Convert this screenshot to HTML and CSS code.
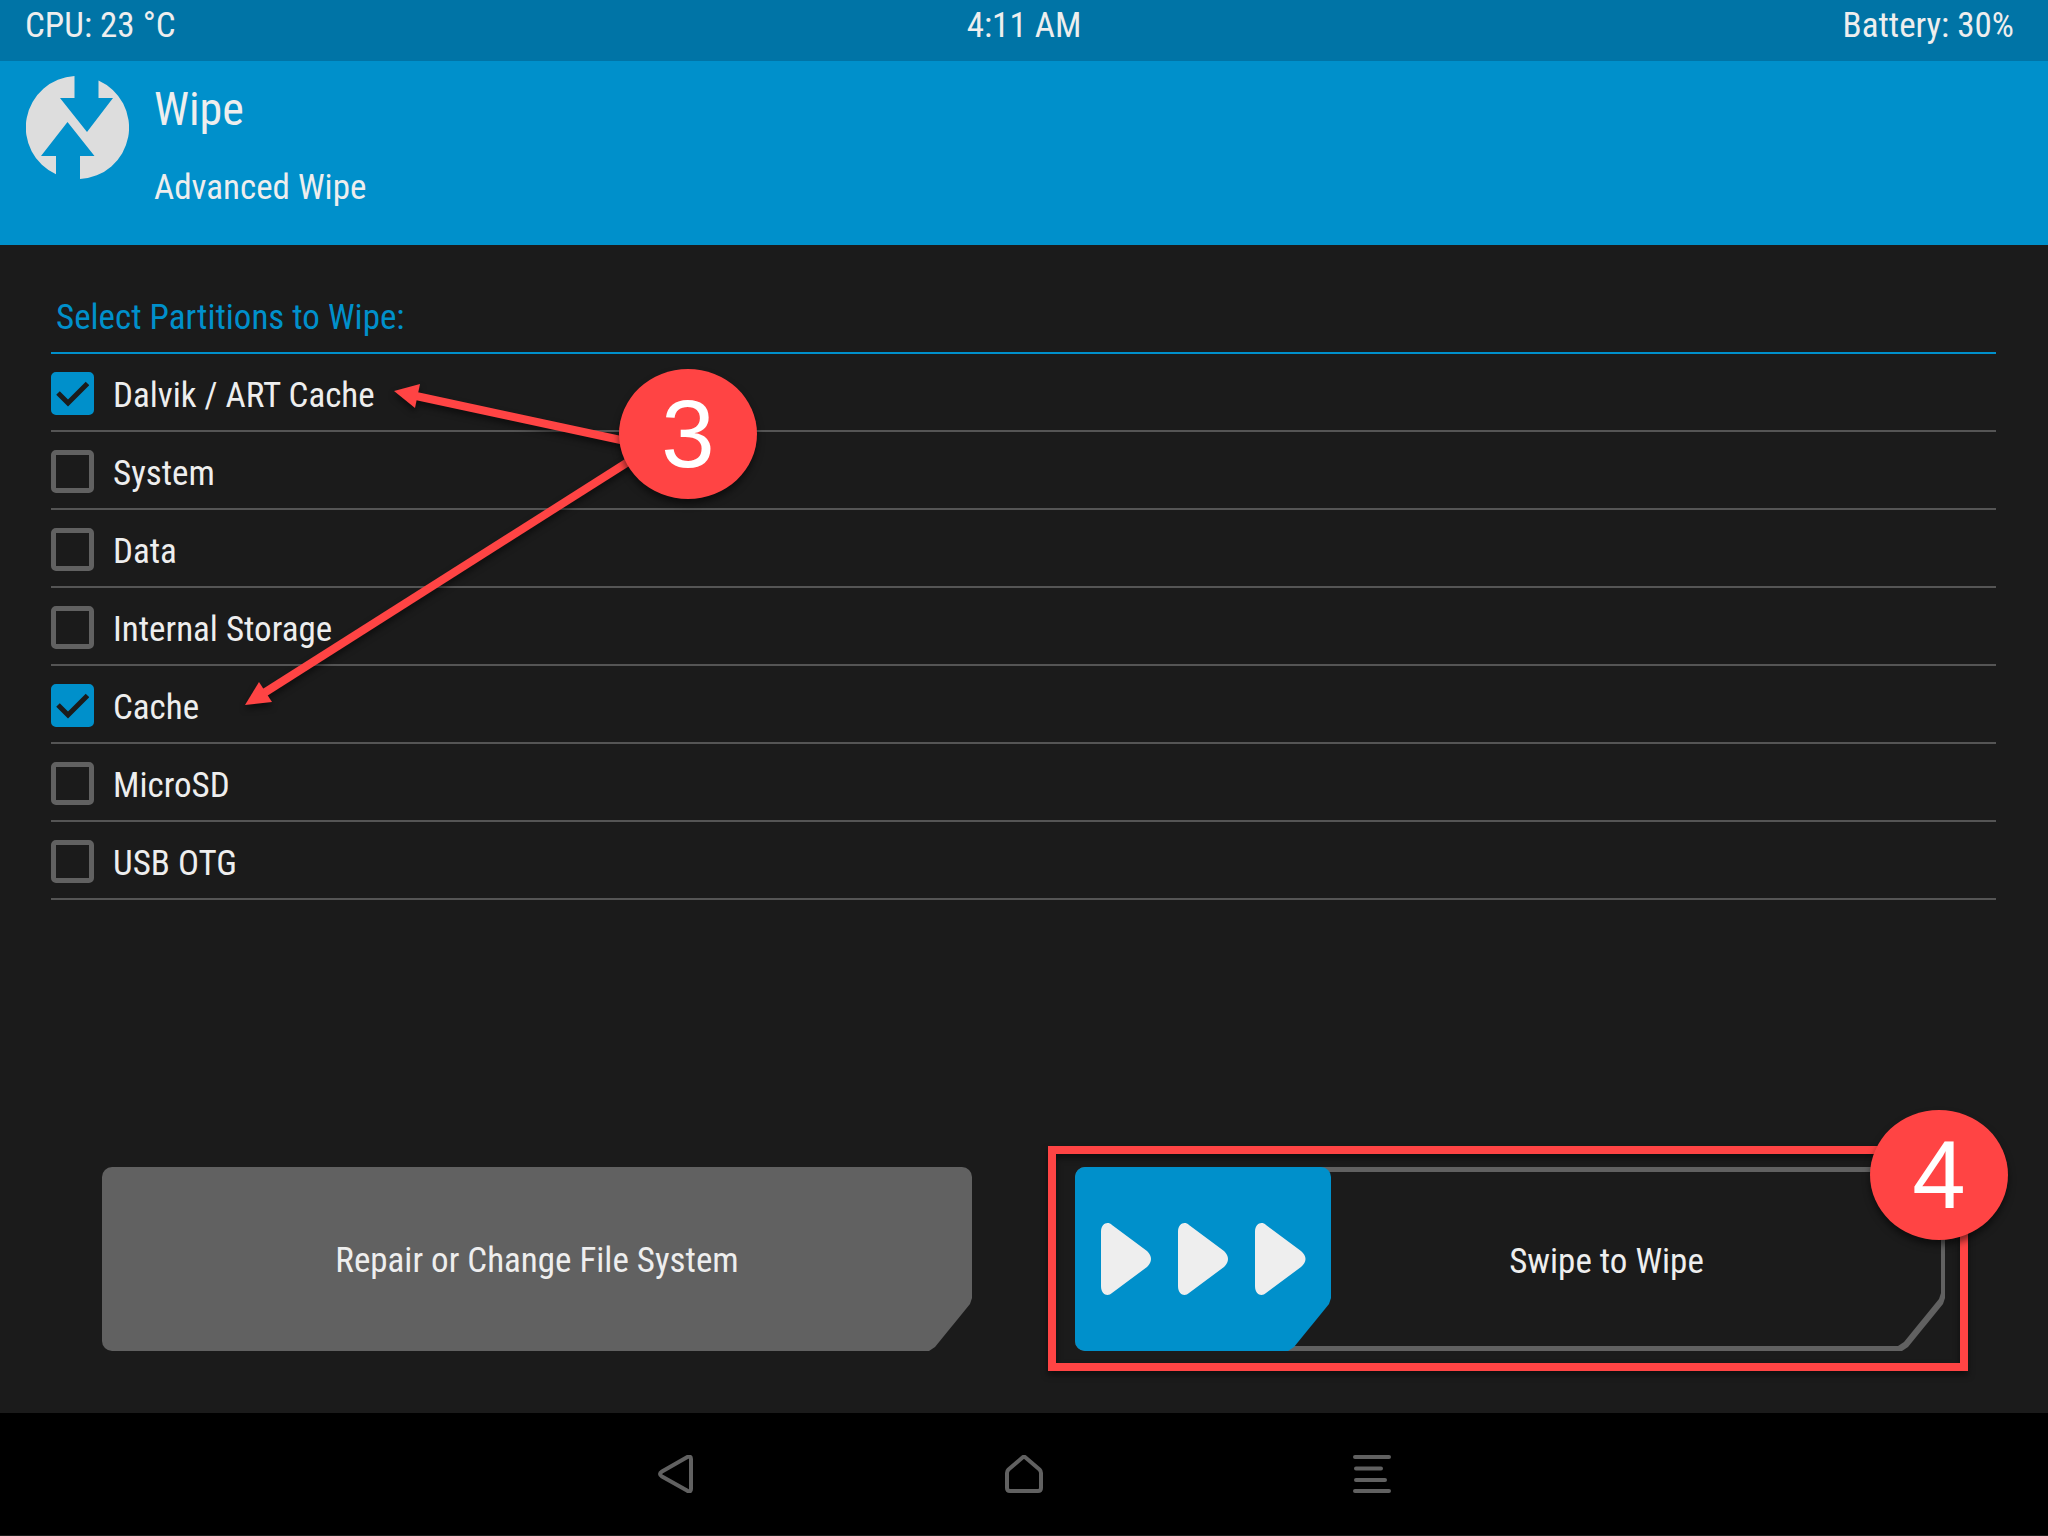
FILE: index.html
```html
<!DOCTYPE html>
<html lang="en">
<head>
<meta charset="utf-8">
<meta name="viewport" content="width=device-width, initial-scale=1">
<title>Advanced Wipe</title>
<link rel="stylesheet" href="styles.css">
</head>
<body>
<div class="status">
  <span class="status-cpu">CPU: 23 °C</span>
  <span>4:11 AM</span>
  <span class="status-battery">Battery: 30%</span>
</div>

<header class="header">
  <svg class="logo" viewBox="0 0 103 103" aria-hidden="true">
    <path fill="#ddd" d="M48.500 0V22H34L61 56L87 22H72.500V4.500A51.500 51.500 0 0 1 54 103V80H68.500L41.500 46L15 80H30V98.300A51.500 51.500 0 0 1 48.500 0Z"/>
  </svg>
  <div class="titles">
    <h1 class="title">Wipe</h1>
    <p class="subtitle">Advanced Wipe</p>
  </div>
</header>

<main class="main">
  <form class="form">
    <div class="list">
      <fieldset class="partitions">
        <legend class="partitions-title">Select Partitions to Wipe:</legend>
        <label class="row"><input class="check" type="checkbox" checked>Dalvik / ART Cache</label>
        <label class="row"><input class="check" type="checkbox">System</label>
        <label class="row"><input class="check" type="checkbox">Data</label>
        <label class="row"><input class="check" type="checkbox">Internal Storage</label>
        <label class="row"><input class="check" type="checkbox" checked>Cache</label>
        <label class="row"><input class="check" type="checkbox">MicroSD</label>
        <label class="row"><input class="check" type="checkbox">USB OTG</label>
      </fieldset>
      <svg class="arrows" viewBox="0 0 400 330" aria-hidden="true">
        <g fill="#ff4444" stroke="#ff4444">
          <path stroke="none" d="M10 16L36 9L31 33Z"/>
          <path stroke-width="8" d="M32 21L246 67"/>
          <path stroke="none" d="M-139 330L-125 307L-112 327Z"/>
          <path stroke-width="8" d="M-120 318L244 87"/>
        </g>
      </svg>
      <span class="badge badge-three">3</span>
    </div>

    <div class="actions">
      <button class="repair" type="button">Repair or Change File System</button>
      <div class="swipe">
        <input class="swipe-range" id="swipe" type="range" min="0" max="100" value="0">
        <label class="swipe-label" for="swipe">Swipe to Wipe</label>
        <span class="frame"></span>
        <span class="badge badge-four">4</span>
      </div>
    </div>
  </form>
</main>

<nav class="nav">
  <button class="nav-button" type="button" aria-label="Back">
    <svg class="nav-icon" viewBox="0 0 38 38"><path d="M29.500 2.500Q34 0 34 4V34Q34 38 30 35.500L5 21.500Q1 19 5 16.500Z"/></svg>
  </button>
  <button class="nav-button" type="button" aria-label="Home">
    <svg class="nav-icon" viewBox="0 0 38 38"><path d="M2 18Q2 16 3.500 14.500L17.500 2.500Q19 1 20.500 2.500L34.500 14.500Q36 16 36 18V33Q36 36 33 36H5Q2 36 2 33Z"/></svg>
  </button>
  <button class="nav-button" type="button" aria-label="Log">
    <svg class="nav-icon" viewBox="0 0 38 38"><path stroke-width="4" d="M2 2H36M3 13.500H28M3 25H32M2 36H36"/></svg>
  </button>
</nav>
</body>
</html>
```
FILE: styles.css
```css
* {
  box-sizing: border-box;
}

body {
  margin: 0;
  min-height: 100vh;
  display: flex;
  flex-direction: column;
  background: #1b1b1b;
  color: #eee;
  font: 35px/41px "Roboto Condensed", Roboto, sans-serif;
}

h1, p {
  margin: 0;
  font-weight: 400;
}

button {
  border: 0;
  font: inherit;
  color: inherit;
  cursor: pointer;
}

/* Status bar */
.status {
  display: grid;
  grid-template-columns: 1fr auto 1fr;
  padding: 5px 0 15px;
  background: #0074a6;
}

.status-cpu {
  padding-left: 25px;
}

.status-battery {
  padding-right: 34px;
  text-align: right;
}

/* Header */
.header {
  display: flex;
  gap: 25px;
  padding: 15px 26px 37px;
  background: #0090cb;
}

.logo {
  width: 103px;
  height: 103px;
}

.titles {
  display: flex;
  flex-direction: column;
  gap: 28px;
  padding-top: 3px;
}

.title {
  font-size: 46px;
  line-height: 60px;
}

/* Partition list */
.main,
.form {
  flex: 1;
  display: flex;
  flex-direction: column;
}

.list {
  position: relative;
}

.partitions {
  margin: 0 52px 0 51px;
  padding: 0;
  border: 0;
  min-width: 0;
}

.partitions-title {
  width: 100%;
  padding: 52px 5px 14px;
  border-bottom: 2px solid #0090cb;
  color: #0090cb;
}

.row {
  display: flex;
  align-items: center;
  gap: 19px;
  height: 78px;
  padding-top: 6px;
  border-bottom: 2px solid #555;
}

.check {
  appearance: none;
  width: 43px;
  height: 43px;
  margin: 0 0 4px;
  border: 5px solid #616161;
  border-radius: 5px;
}

.check:checked {
  border-color: #0090cb;
  background: #0090cb url("data:image/svg+xml,%3Csvg xmlns='http://www.w3.org/2000/svg' viewBox='0 0 43 43'%3E%3Cpath d='M7 21L17 31L36.500 11.500' fill='none' stroke='%231b1b1b' stroke-width='5'/%3E%3C/svg%3E") center / 43px 43px no-repeat border-box;
}

/* Action buttons */
.actions {
  display: grid;
  grid-template-columns: 1fr 1fr;
  gap: 103px;
  margin-top: auto;
  padding: 60px 103px 62px 102px;
}

.repair,
.swipe-range,
.swipe-range::before,
.swipe-range::-webkit-slider-thumb {
  border-radius: 10px;
  clip-path: polygon(0 0, 100% 0, 100% calc(100% - 53px), calc(100% - 2px) calc(100% - 47px), calc(100% - 37px) calc(100% - 4px), calc(100% - 43px) 100%, 0 100%);
}

.repair {
  height: 184px;
  padding-top: 3px;
  background: #616161;
}

.swipe {
  position: relative;
  display: grid;
}

.swipe-range {
  appearance: none;
  grid-area: 1 / 1;
  position: relative;
  width: 100%;
  height: 184px;
  margin: 0;
  background: #616161;
}

.swipe-range::before {
  content: "";
  position: absolute;
  inset: 5px 4px;
  background: #1b1b1b;
}

.swipe-range::-webkit-slider-thumb {
  appearance: none;
  position: relative;
  width: 256px;
  height: 184px;
  background: #0090cb url("data:image/svg+xml,%3Csvg xmlns='http://www.w3.org/2000/svg' viewBox='0 0 256 184'%3E%3Cg fill='%23eee'%3E%3Cpath d='M26 65C26 56 33 54 37 58L72 84Q80 92 72 100L37 126C33 130 26 128 26 119Z'/%3E%3Cpath d='M103 65C103 56 110 54 114 58L149 84Q157 92 149 100L114 126C110 130 103 128 103 119Z'/%3E%3Cpath d='M180 65C180 56 187 54 191 58L226 84Q235 92 226 100L191 126C187 130 180 128 180 119Z'/%3E%3C/g%3E%3C/svg%3E") center / 256px 184px no-repeat;
}

.swipe-label {
  grid-area: 1 / 1;
  z-index: 1;
  place-self: center;
  padding: 4px 0 0 193px;
  pointer-events: none;
}

/* Callouts laid over the screen */
.arrows {
  position: absolute;
  left: 384px;
  top: 130px;
  width: 400px;
  height: 330px;
  overflow: visible;
  pointer-events: none;
  filter: drop-shadow(0 4px 3px rgba(0, 0, 0, 0.5));
}

.badge {
  position: absolute;
  z-index: 2;
  width: 138px;
  height: 130px;
  border-radius: 50%;
  background: #ff4444;
  box-shadow: 0 5px 7px rgba(0, 0, 0, 0.5);
  color: #fff;
  font: 96px/130px "Liberation Sans", Arial, sans-serif;
  text-align: center;
  pointer-events: none;
}

.badge-three {
  left: 619px;
  top: 124px;
}

.badge-four {
  right: -63px;
  top: -57px;
}

.frame {
  position: absolute;
  inset: -21px -23px -20px -27px;
  border: 8px solid #ff4444;
  filter: drop-shadow(0 4px 3px rgba(0, 0, 0, 0.5));
  pointer-events: none;
}

/* Navigation bar */
.nav {
  display: flex;
  justify-content: center;
  height: 122px;
  margin-bottom: 1px;
  background: #000;
}

.nav-button {
  display: grid;
  place-items: center;
  width: 17%;
  padding: 0;
  background: none;
}

.nav-icon {
  width: 38px;
  height: 38px;
  fill: none;
  stroke: #616161;
  stroke-width: 4;
  stroke-linejoin: round;
  stroke-linecap: round;
}
```
